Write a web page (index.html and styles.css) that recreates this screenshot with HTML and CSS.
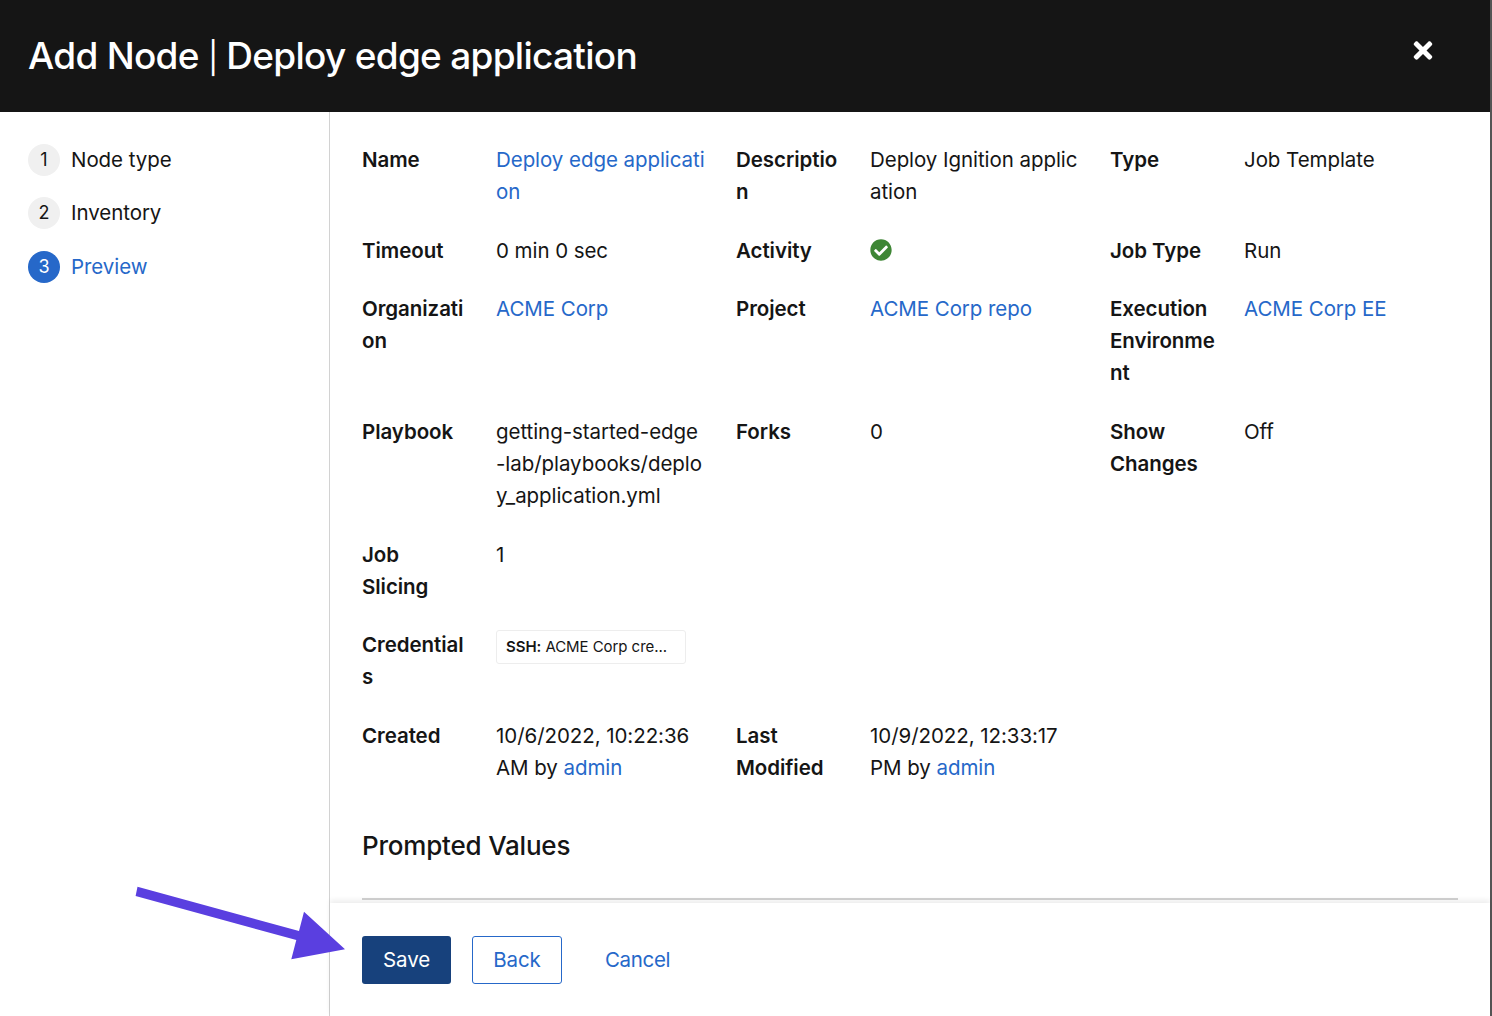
FILE: index.html
```html
<!DOCTYPE html>
<html lang="en">
<head>
    <meta charset="UTF-8">
    <title>Add Node | Deploy edge application</title>
    <link rel="stylesheet" href="styles.css">
</head>
<body>
    <div class="modal">
        <header class="modal-header">
            <h1>Add Node <span class="title-sep">|</span> Deploy edge application</h1>
            <button class="close-btn" aria-label="Close">
                <svg viewBox="0 0 352 512" width="20" height="27" fill="currentColor"><path d="M242.72 256l100.07-100.07c12.28-12.28 12.28-32.19 0-44.48l-22.24-22.24c-12.28-12.28-32.19-12.28-44.48 0L176 189.28 75.93 89.21c-12.28-12.28-32.19-12.28-44.48 0L9.21 111.45c-12.28 12.28-12.28 32.19 0 44.48L109.28 256 9.21 356.07c-12.28 12.28-12.28 32.19 0 44.48l22.24 22.24c12.28 12.28 32.2 12.28 44.48 0L176 322.72l100.07 100.07c12.28 12.28 32.2 12.28 44.48 0l22.24-22.24c12.28-12.28 12.28-32.19 0-44.48L242.72 256z"/></svg>
            </button>
        </header>

        <div class="modal-body">
            <nav class="steps">
                <div class="step"><span class="step-num">1</span><span>Node type</span></div>
                <div class="step"><span class="step-num">2</span><span>Inventory</span></div>
                <div class="step step-current"><span class="step-num">3</span><span>Preview</span></div>
            </nav>

            <div class="wizard-main">
                <main class="preview">
                    <dl class="details">
                        <dt>Name</dt>
                        <dd><a href="#">Deploy edge applicati<br>on</a></dd>
                        <dt>Descriptio<br>n</dt>
                        <dd>Deploy Ignition applic<br>ation</dd>
                        <dt>Type</dt>
                        <dd>Job Template</dd>

                        <dt>Timeout</dt>
                        <dd>0 min 0 sec</dd>
                        <dt>Activity</dt>
                        <dd>
                            <svg class="status-ok" viewBox="0 0 512 512" width="22" height="22" fill="#3e8635"><path d="M504 256c0 136.967-111.033 248-248 248S8 392.967 8 256 119.033 8 256 8s248 111.033 248 248zM227.314 387.314l184-184c6.248-6.248 6.248-16.379 0-22.627l-22.627-22.627c-6.248-6.249-16.379-6.249-22.628 0L216 308.118l-70.059-70.059c-6.248-6.248-16.379-6.248-22.628 0l-22.627 22.627c-6.248 6.248-6.248 16.379 0 22.627l104 104c6.249 6.25 16.379 6.25 22.628.001z"/></svg>
                        </dd>
                        <dt>Job Type</dt>
                        <dd>Run</dd>

                        <dt>Organizati<br>on</dt>
                        <dd><a href="#">ACME Corp</a></dd>
                        <dt>Project</dt>
                        <dd><a href="#">ACME Corp repo</a></dd>
                        <dt>Execution<br>Environme<br>nt</dt>
                        <dd><a href="#">ACME Corp EE</a></dd>

                        <dt>Playbook</dt>
                        <dd>getting-started-edge<br>-lab/playbooks/deplo<br>y_application.yml</dd>
                        <dt>Forks</dt>
                        <dd>0</dd>
                        <dt>Show<br>Changes</dt>
                        <dd>Off</dd>

                        <dt>Job<br>Slicing</dt>
                        <dd class="wide">1</dd>

                        <dt>Credential<br>s</dt>
                        <dd class="wide"><span class="chip"><b>SSH:</b> ACME Corp cre...</span></dd>

                        <dt>Created</dt>
                        <dd>10/6/2022, 10:22:36<br>AM by <a href="#">admin</a></dd>
                        <dt>Last<br>Modified</dt>
                        <dd>10/9/2022, 12:33:17<br>PM by <a href="#">admin</a></dd>
                    </dl>

                    <h2>Prompted Values</h2>
                    <hr class="rule">
                </main>

                <footer class="actions">
                    <button class="btn btn-primary">Save</button>
                    <button class="btn btn-secondary">Back</button>
                    <button class="btn btn-link">Cancel</button>
                </footer>
            </div>
        </div>
    </div>

    <!-- annotation arrow painted over the screenshot -->
    <svg class="arrow" width="1492" height="1016" viewBox="0 0 1492 1016">
        <polygon fill="#5a3fe0" points="137.5,886.7 135.6,896 296.3,940 291.3,959.3 345,949.3 304,911.7 299,931"/>
    </svg>
</body>
</html>
```

FILE: styles.css
```css
*{
    margin:0;
    padding:0;
    box-sizing:border-box;
}

html, body{
    height:100%;
    overflow:hidden;
}

body{
    font-family:Inter, "Liberation Sans", sans-serif;
    font-size:20.5px;
    letter-spacing:-0.06px;
    line-height:32px;
    color:#151515;
    background-color:white;
    position:relative;
}

a{
    color:#2668c9;
    text-decoration:none;
}

.modal{
    height:100%;
    display:flex;
    flex-direction:column;
    border-right:2px solid #555;
}

.modal-header{
    height:112px;
    flex:none;
    background-color:#151515;
    color:white;
    display:flex;
    align-items:center;
    justify-content:space-between;
    padding:0 57px 0 28px;
}

.modal-header h1{
    font-size:37px;
    font-weight:500;
    letter-spacing:-0.72px;
    line-height:48px;
    padding-top:2px;
}

.title-sep{
    font-size:31px;
    font-weight:400;
    letter-spacing:-1px;
}

.close-btn{
    background:none;
    border:none;
    color:white;
    display:flex;
    margin-top:-12px;
}

.modal-body{
    flex:1;
    display:flex;
    min-height:0;
}

.steps{
    width:330px;
    flex:none;
    border-right:1px solid #d2d2d2;
    padding:32px 28px 0;
    display:flex;
    flex-direction:column;
    gap:21.4px;
}

.step{
    display:flex;
    align-items:center;
    gap:11px;
    height:32px;
}

.step-num{
    width:32px;
    height:32px;
    border-radius:50%;
    background-color:#f0f0f0;
    display:flex;
    align-items:center;
    justify-content:center;
    font-size:18px;
}

.step-current{
    color:#2668c9;
}

.step-current .step-num{
    background-color:#2668c9;
    color:white;
}

.wizard-main{
    flex:1;
    display:flex;
    flex-direction:column;
    min-width:0;
}

.preview{
    flex:1;
    padding:32px 32px 0;
    min-height:0;
}

.details{
    display:grid;
    grid-template-columns:110px 216px 110px 216px 110px 1fr;
    column-gap:24px;
    row-gap:26.7px;
}

.details dt{
    font-weight:600;
}

.wide{
    grid-column:span 5;
}

.status-ok{
    display:block;
    margin-top:4px;
}

.chip{
    display:inline-block;
    width:190px;
    height:34px;
    line-height:32px;
    border:1px solid #ededed;
    border-radius:3px;
    padding:0 9px;
    font-size:15px;
    white-space:nowrap;
}

.chip b{
    font-weight:600;
}

.preview h2{
    font-size:26px;
    font-weight:500;
    letter-spacing:-0.2px;
    line-height:36px;
    margin-top:44px;
}

.rule{
    border:none;
    border-top:2px solid #d2d2d2;
    margin-top:34px;
}

.actions{
    height:113px;
    flex:none;
    display:flex;
    align-items:center;
    padding:0 32px;
    box-shadow:0 -3px 5px rgba(0,0,0,0.07);
    background-color:white;
    gap:21px;
}

.btn{
    height:48px;
    font:inherit;
    letter-spacing:-0.1px;
    border-radius:3px;
    background:none;
    border:none;
}

.btn-primary{
    width:89px;
    background-color:#17417c;
    color:white;
}

.btn-secondary{
    width:90px;
    border:1px solid #2668c9;
    color:#2668c9;
}

.btn-link{
    padding:0 22px;
    letter-spacing:-0.35px;
    color:#2668c9;
}

.arrow{
    position:absolute;
    top:0;
    left:0;
    pointer-events:none;
}
```
